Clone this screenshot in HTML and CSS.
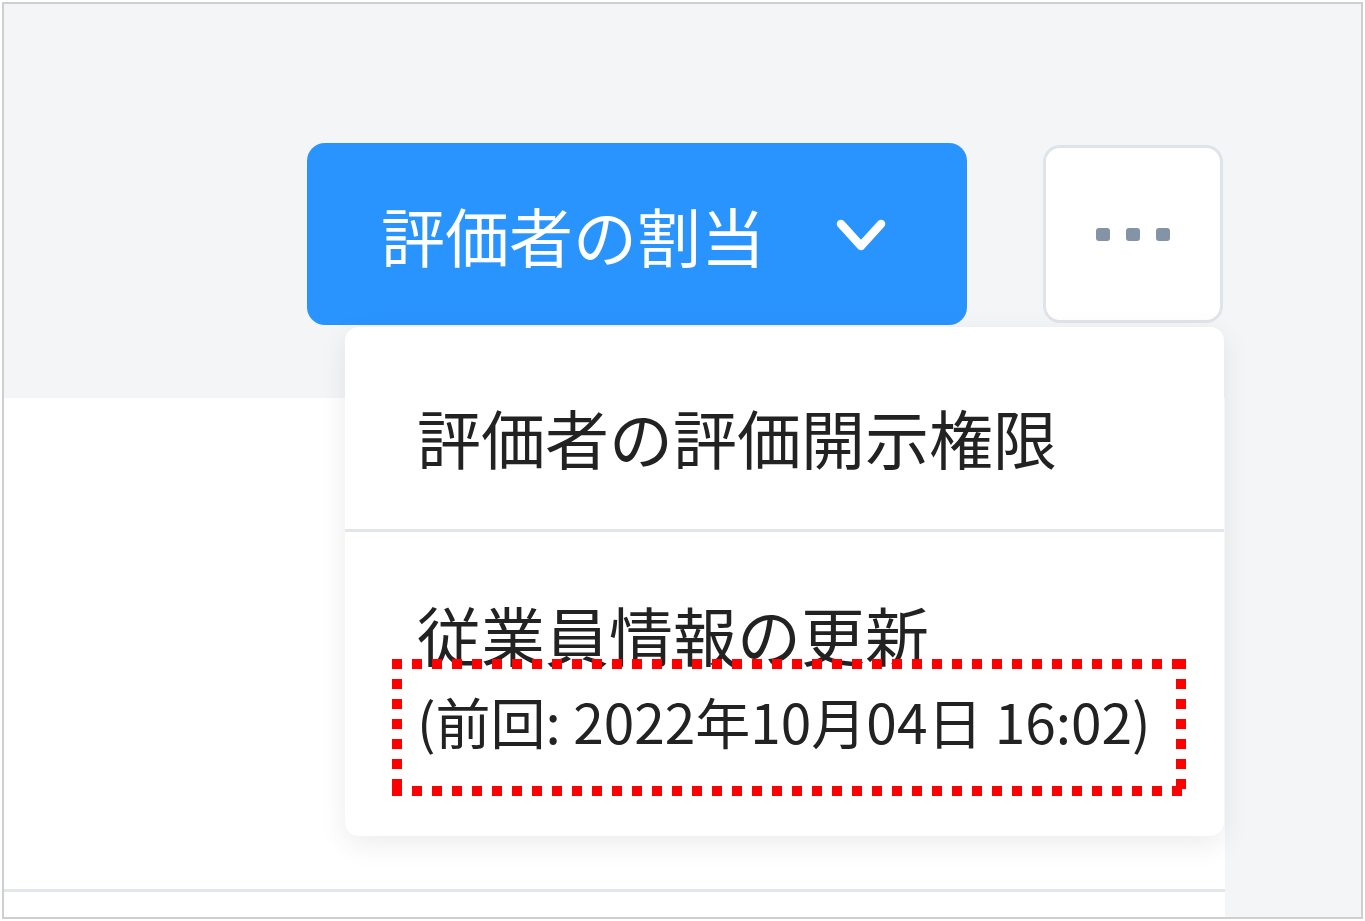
FILE: index.html
```html
<!DOCTYPE html>
<html lang="ja">
<head>
    <meta charset="UTF-8">
    <meta name="viewport" content="width=device-width, initial-scale=1.0">
    <title>評価者の割当</title>
    <link rel="stylesheet" href="styles.css">
</head>
<body>

<div class="frame">
    <div class="toolbar">
        <div class="actions">
            <div class="assign">
                <button class="btn-primary" type="button">
                    <span>評価者の割当</span>
                    <svg class="chevron" width="52" height="34" viewBox="0 0 52 34">
                        <polyline points="6,6 26,28 46,6" fill="none" stroke="#fff" stroke-width="8.5" stroke-linecap="round" stroke-linejoin="round"/>
                    </svg>
                </button>
                <ul class="menu">
                    <li class="menu-item">評価者の評価開示権限</li>
                    <li class="menu-item">
                        従業員情報の更新
                        <span class="menu-note">(前回: 2022年10月04日 16:02)</span>
                    </li>
                </ul>
            </div>
            <button class="btn-more" type="button">
                <span class="dot"></span>
                <span class="dot"></span>
                <span class="dot"></span>
            </button>
        </div>
    </div>

    <div class="panel">
        <div class="panel-row"></div>
    </div>
</div>

</body>
</html>
```

FILE: styles.css
```css
body {
    margin: 0;
    padding: 2px;
    background-color: #fff;
    font-family: "Noto Sans CJK JP", "Noto Sans", sans-serif;
}
.frame {
    height: 917px;
    box-sizing: border-box;
    border: 2px solid #cfcfcf;
    background-color: #f3f5f7;
    display: flex;
    flex-direction: column;
}
.toolbar {
    height: 394px;
    flex-shrink: 0;
    box-sizing: border-box;
    padding: 139px 138px 0 0;
    display: flex;
    justify-content: flex-end;
}
.actions {
    display: flex;
    align-items: center;
    gap: 76px;
    height: 182px;
}
.assign {
    position: relative;
}
.btn-primary {
    width: 660px;
    height: 182px;
    box-sizing: border-box;
    padding: 0 0 0 74px;
    border: none;
    border-radius: 18px;
    background-color: #2a94fe;
    color: #fff;
    font-family: inherit;
    font-size: 64px;
    display: flex;
    align-items: center;
    gap: 70px;
    cursor: pointer;
}
.chevron {
    display: block;
    margin-top: 2px;
}
.btn-more {
    width: 180px;
    height: 178px;
    box-sizing: border-box;
    border: 3px solid #dfe4ea;
    border-radius: 17px;
    background-color: #fff;
    display: flex;
    align-items: center;
    justify-content: center;
    gap: 16px;
    padding: 0;
    cursor: pointer;
}
.dot {
    width: 14px;
    height: 13px;
    border-radius: 3px;
    background-color: #8593a7;
}

/* dropdown */
.menu {
    position: absolute;
    top: 184px;
    left: 38px;
    width: 879px;
    height: 509px;
    box-sizing: border-box;
    margin: 0;
    padding: 16px 0 0;
    list-style-type: none;
    background-color: #fff;
    border-radius: 14px;
    box-shadow: 0 8px 28px rgba(0, 0, 0, 0.08);
    z-index: 2;
    color: #222;
    font-size: 64px;
    line-height: 90px;
}
.menu-item {
    padding: 48px 30px 48px 72px;
}
.menu-item + .menu-item {
    border-top: 3px solid #e1e6ec;
    padding-top: 56px;
}
.menu-note {
    position: relative;
    display: block;
    margin-top: 4px;
    font-size: 55px;
    line-height: 77px;
}
/* highlight box drawn over the note */
.menu-note::after {
    content: "";
    position: absolute;
    top: -23px;
    left: -25px;
    width: 794px;
    height: 137px;
    background-image:
        repeating-linear-gradient(90deg, #f00 0 10px, transparent 10px 20px),
        repeating-linear-gradient(90deg, #f00 0 10px, transparent 10px 20px),
        repeating-linear-gradient(180deg, #f00 0 10px, transparent 10px 20px),
        repeating-linear-gradient(180deg, #f00 0 10px, transparent 10px 20px);
    background-size: 100% 10px, 100% 10px, 10px 100%, 10px 100%;
    background-position: top left, bottom left, top left, top right;
    background-repeat: no-repeat;
}

.panel {
    flex: 1;
    width: 1221px;
    background-color: #fff;
}
.panel-row {
    height: 491px;
    border-bottom: 3px solid #e2e7ed;
}
```
